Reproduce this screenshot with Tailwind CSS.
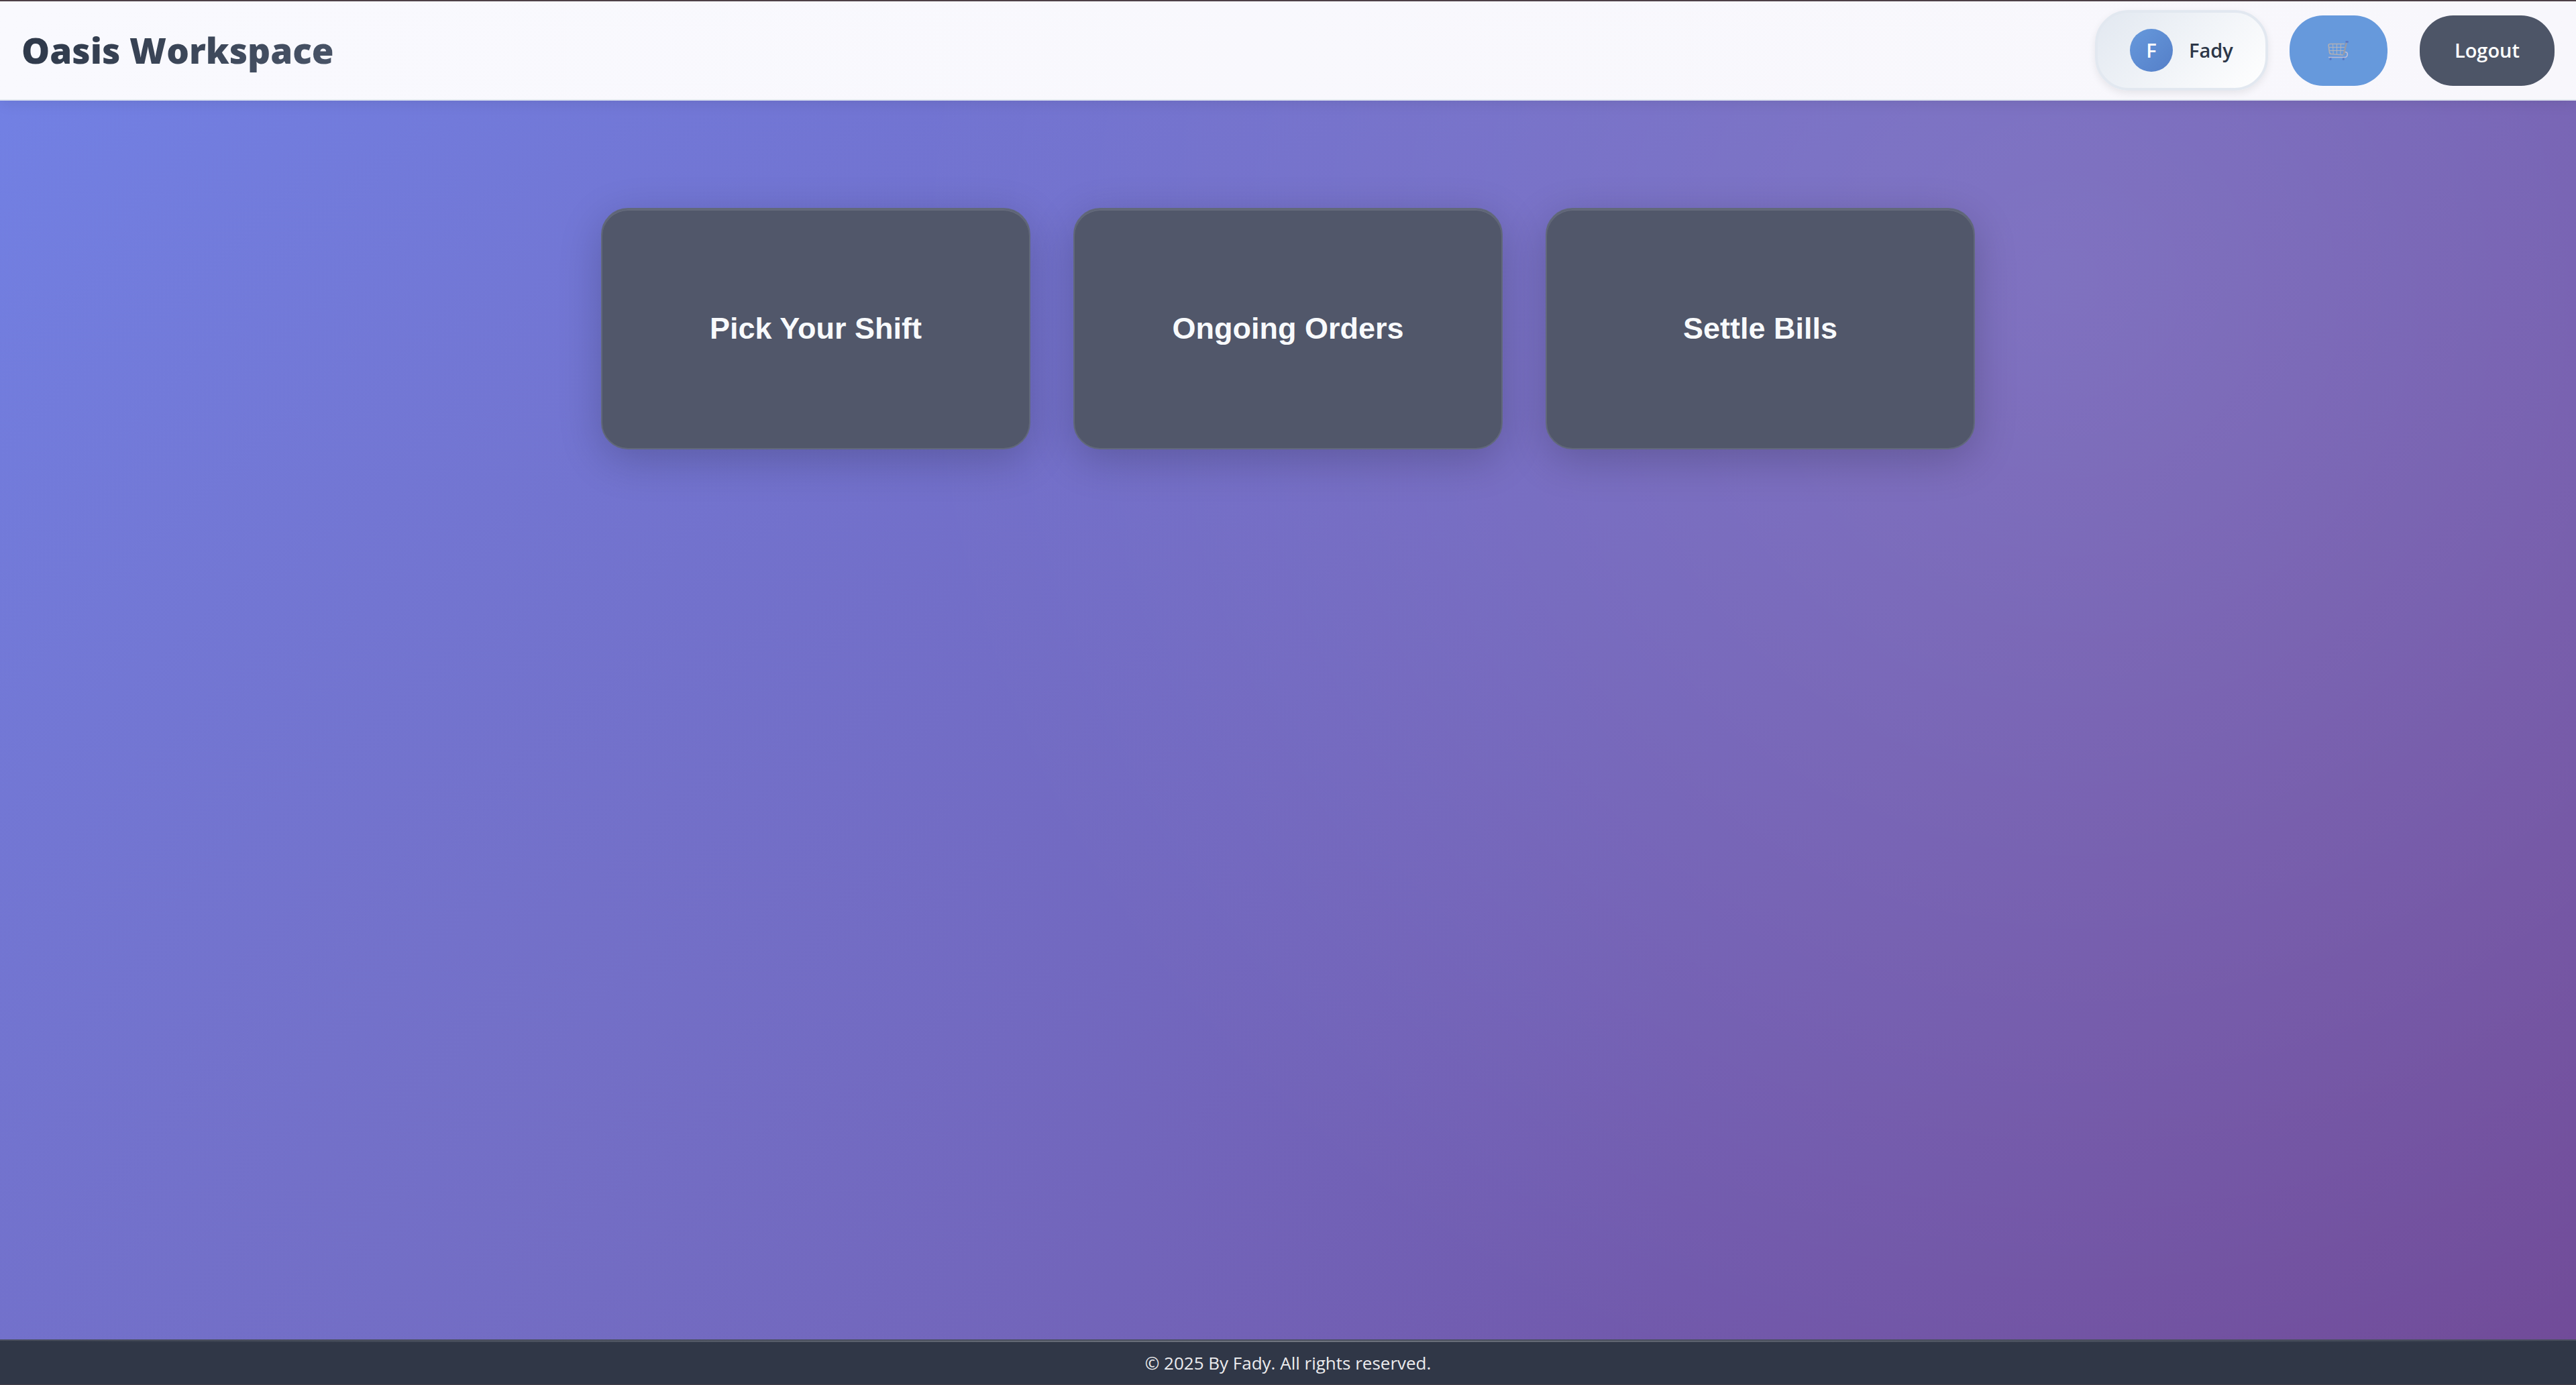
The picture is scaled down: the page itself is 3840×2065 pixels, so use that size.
<!DOCTYPE html>
<html lang="en">
<head>
<meta charset="utf-8">
<meta name="viewport" content="width=device-width, initial-scale=1">
<title>Oasis Workspace</title>
<script src="https://cdn.jsdelivr.net/npm/@tailwindcss/browser@4"></script>
</head>
<body class="flex min-h-screen flex-col border-t-2 border-[#4d4047] bg-[radial-gradient(circle_at_20%_80%,rgba(120,119,198,0.3)_0%,transparent_50%),radial-gradient(circle_at_80%_20%,rgba(255,255,255,0.1)_0%,transparent_50%),linear-gradient(135deg,#7282e6_0%,#7167c0_50%,#714b98_100%)] font-['Open_Sans',sans-serif]">
  <header class="flex h-[148px] items-center justify-between border-b-2 border-slate-200 bg-linear-to-r from-[#f9f9fe] to-[#f8f7fc] px-8 shadow-[0_4px_20px_rgba(0,0,0,0.08)]">
    <h1 class="bg-linear-135 from-[#2d3748] to-[#4a5568] bg-clip-text text-[53px] leading-[76px] font-extrabold text-transparent">Oasis Workspace</h1>
    <div class="flex items-center">
      <div class="mr-8 flex items-center gap-6 rounded-[50px] border-4 border-slate-200 bg-linear-135 from-slate-200 to-white px-12 py-6 shadow-[0_4px_12px_rgba(0,0,0,0.08)]">
        <span class="flex size-16 items-center justify-center rounded-full bg-linear-135 from-[#6699dc] to-[#557fc8] text-[29px] font-semibold text-white">F</span>
        <span class="text-[29px] leading-[48px] font-semibold text-[#2d3748]">Fady</span>
      </div>
      <button type="button" aria-label="Cart" class="mr-12 flex h-[105px] w-[146px] items-center justify-center rounded-[50px] bg-[#6699dc]">
        <svg class="size-8" viewBox="0 0 32 32" fill="none" aria-hidden="true">
          <path d="M2 11.500h23M2.500 16.500h21.500M7.500 6l.7 15.500M13.500 6v16M19.500 6l-.7 16.500" stroke="#b4b5bc" stroke-width="1"/>
          <path d="M25 6.500H3.500Q1 6.500 1.200 9l1.300 10q.4 2.300 2.500 2.500l18 1.500" stroke="#b0afb4" stroke-width="1.700" stroke-linejoin="round"/>
          <path d="M28 4l-4.500 19" stroke="#9c9ba3" stroke-width="2.200"/>
          <path d="M25.500 18.500q4 .2 3.800 3.500-.2 4.300-4.300 4.500H1" stroke="#bdbdd4" stroke-width="1.700"/>
          <rect x="26.500" y="2" width="4.200" height="2.800" rx=".6" fill="#5b76c2"/>
          <path d="M3 27.500h3M22 27.500h3" stroke="#6f83c6" stroke-width="1"/>
          <circle cx="4" cy="29.300" r="1.500" fill="#5878c6"/>
          <circle cx="23.300" cy="29.300" r="1.500" fill="#5878c6"/>
        </svg>
      </button>
      <button type="button" class="h-[105px] rounded-[50px] bg-[#4d5567] px-[52px] text-[29px] font-semibold text-white">Logout</button>
    </div>
  </header>
  <main class="flex-1 px-8 pt-40">
    <div class="mx-auto grid max-w-[2048px] grid-cols-3 gap-16 font-['Liberation_Sans',sans-serif]">
      <button type="button" class="h-[360px] rounded-[40px] border-2 border-[#61687a] bg-[#51576a] text-[45px] font-bold text-[#f8fafc] shadow-[0_16px_64px_rgba(0,0,0,0.2),inset_0_2px_0_#646a7b]">Pick Your Shift</button>
      <button type="button" class="h-[360px] rounded-[40px] border-2 border-[#61687a] bg-[#51576a] text-[45px] font-bold text-[#f8fafc] shadow-[0_16px_64px_rgba(0,0,0,0.2),inset_0_2px_0_#646a7b]">Ongoing Orders</button>
      <button type="button" class="h-[360px] rounded-[40px] border-2 border-[#61687a] bg-[#51576a] text-[45px] font-bold text-[#f8fafc] shadow-[0_16px_64px_rgba(0,0,0,0.2),inset_0_2px_0_#646a7b]">Settle Bills</button>
    </div>
  </main>
  <footer class="border-t-2 border-b border-t-[#4a4f5f] border-b-[#453f48] bg-[#303747]">
    <div class="h-[2px] bg-linear-to-r from-transparent via-[#6f747f] to-transparent"></div>
    <p class="text-center text-[26px] leading-[63px] text-[#ececee]">© 2025 By Fady. All rights reserved.</p>
  </footer>
</body>
</html>
